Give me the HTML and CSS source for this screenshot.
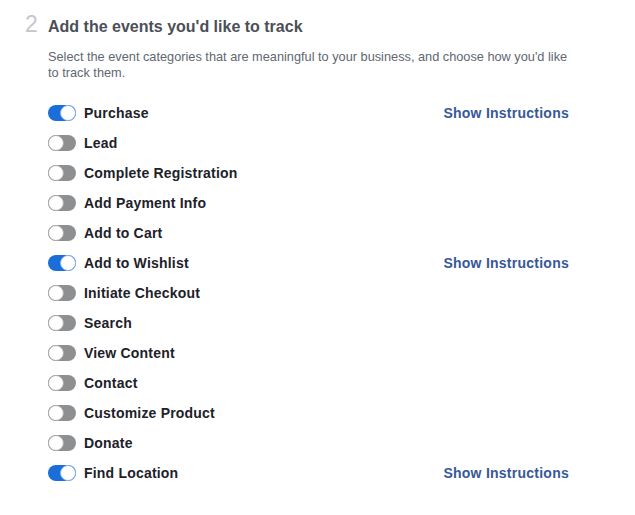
FILE: index.html
```html
<!DOCTYPE html>
<html>
<head>
<meta charset="utf-8">
<link rel="stylesheet" href="styles.css">
</head>
<body>
<section class="step">
  <div class="step-head">
    <span class="step-num">2</span>
    <h2 class="step-title">Add the events you'd like to track</h2>
  </div>
  <div class="step-body">
    <p class="desc">Select the event categories that are meaningful to your business, and choose how you'd like to track them.</p>
    <ul class="events">
      <li class="event"><span class="toggle on"></span><span class="label">Purchase</span><a class="instr">Show Instructions</a></li>
      <li class="event"><span class="toggle"></span><span class="label">Lead</span></li>
      <li class="event"><span class="toggle"></span><span class="label">Complete Registration</span></li>
      <li class="event"><span class="toggle"></span><span class="label">Add Payment Info</span></li>
      <li class="event"><span class="toggle"></span><span class="label">Add to Cart</span></li>
      <li class="event"><span class="toggle on"></span><span class="label">Add to Wishlist</span><a class="instr">Show Instructions</a></li>
      <li class="event"><span class="toggle"></span><span class="label">Initiate Checkout</span></li>
      <li class="event"><span class="toggle"></span><span class="label">Search</span></li>
      <li class="event"><span class="toggle"></span><span class="label">View Content</span></li>
      <li class="event"><span class="toggle"></span><span class="label">Contact</span></li>
      <li class="event"><span class="toggle"></span><span class="label">Customize Product</span></li>
      <li class="event"><span class="toggle"></span><span class="label">Donate</span></li>
      <li class="event"><span class="toggle on"></span><span class="label">Find Location</span><a class="instr">Show Instructions</a></li>
    </ul>
  </div>
</section>
</body>
</html>
```
FILE: styles.css
```css
html, body {
  margin: 0;
  padding: 0;
  background: #fff;
}
body {
  font-family: "Liberation Sans", Arial, sans-serif;
  -webkit-font-smoothing: antialiased;
}
.step {
  padding: 11px 0 0 25px;
  width: 544px;
}
.step-head {
  display: flex;
  align-items: baseline;
  gap: 10px;
}
.step-num {
  font-size: 23px;
  color: #c5c7cb;
  width: 13px;
  line-height: 26px;
}
.step-title {
  margin: 0;
  font-size: 16px;
  font-weight: bold;
  color: #4b4f56;
  line-height: 26px;
}
.step-body {
  padding-left: 23px;
}
.desc {
  margin: 9px 0 0;
  font-size: 12.75px;
  line-height: 16px;
  color: #606770;
}
.events {
  list-style: none;
  margin: 17px 0 0;
  padding: 0;
}
.event {
  display: flex;
  align-items: center;
  height: 30px;
}
.toggle {
  position: relative;
  width: 28px;
  height: 16px;
  border-radius: 8px;
  background: #8e8f91;
  flex: none;
  margin-right: 8px;
}
.toggle::after {
  content: "";
  position: absolute;
  top: 0;
  left: 0;
  width: 16px;
  height: 16px;
  box-sizing: border-box;
  border-radius: 50%;
  background: #fff;
  border: 1.5px solid #a9abae;
}
.toggle.on {
  background: #1a6ed8;
}
.toggle.on::after {
  left: 12px;
  border-color: #8fb4e8;
}
.label {
  font-size: 14px;
  font-weight: bold;
  letter-spacing: 0.2px;
  color: #1d2129;
}
.instr {
  margin-left: auto;
  font-size: 14px;
  font-weight: bold;
  letter-spacing: 0.25px;
  color: #365899;
  cursor: pointer;
}
```
